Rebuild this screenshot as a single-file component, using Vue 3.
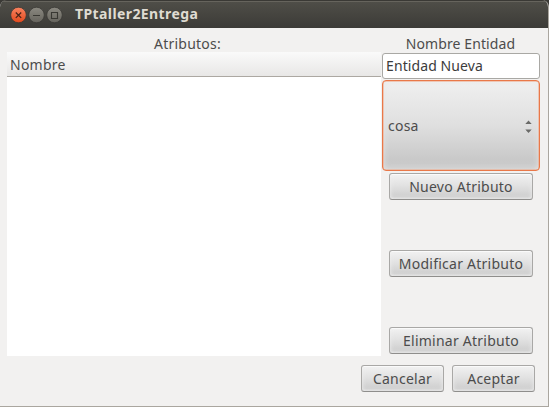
<script setup>
import { ref } from 'vue'

const name = ref('Entidad Nueva')
const actions = [
  { label: 'Nuevo Atributo', cls: 'nuevo' },
  { label: 'Modificar Atributo', cls: 'modificar' },
  { label: 'Eliminar Atributo', cls: 'eliminar' },
]
</script>

<template>
  <div class="window">
    <header class="titlebar">
      <svg class="controls" width="54" height="18" viewBox="0 0 54 18">
        <defs>
          <linearGradient id="close" x1="0" y1="0" x2="0" y2="1">
            <stop offset="0" stop-color="#f88360" />
            <stop offset="1" stop-color="#e2481c" />
          </linearGradient>
          <linearGradient id="grey" x1="0" y1="0" x2="0" y2="1">
            <stop offset="0" stop-color="#8b8981" />
            <stop offset="1" stop-color="#65635c" />
          </linearGradient>
        </defs>
        <g stroke="#3a3935" stroke-width="0.8">
          <circle cx="8.5" cy="9" r="7.8" fill="url(#close)" />
          <circle cx="26.5" cy="9" r="7.8" fill="url(#grey)" />
          <circle cx="44.5" cy="9" r="7.8" fill="url(#grey)" />
        </g>
        <path d="M5.8 6.5l5.4 5.4M11.2 6.5l-5.4 5.4" stroke="#4b2418" stroke-width="1.3" fill="none" />
        <path d="M23 9.5h7M41.5 6.5h6v6h-6z" stroke="#393833" stroke-width="1.1" fill="none" />
      </svg>
      <span class="title">TPtaller2Entrega</span>
    </header>
    <main class="content">
      <section class="left">
        <div class="label attrs"><span>Atributos:</span></div>
        <div class="table">
          <div class="thead"><span>Nombre</span></div>
        </div>
      </section>
      <section class="right">
        <div class="label ent"><span>Nombre Entidad</span></div>
        <div class="entry"><span>{{ name }}</span></div>
        <div class="combo">
          <span>cosa</span>
          <svg width="7" height="14" viewBox="0 0 7 14">
            <path d="M0.3 5L3.5 1.6l3.2 3.4zM0.3 10.6L3.5 14l3.2-3.4z" fill="#6a6a68" />
          </svg>
        </div>
        <div class="actions">
          <button v-for="a in actions" :key="a.cls" :class="['btn', a.cls]"><span>{{ a.label }}</span></button>
        </div>
      </section>
    </main>
    <footer class="footer">
      <button class="btn cancelar"><span>Cancelar</span></button>
      <button class="btn aceptar"><span>Aceptar</span></button>
    </footer>
  </div>
</template>

<style>
body { margin: 0; background: #3b3a36; overflow: hidden; }
</style>

<style scoped>
.window {
  box-sizing: border-box;
  width: 549px;
  height: 407px;
  background: #f2f1f0;
  border-right: 1px solid #aaa69f;
  border-bottom: 1px solid #aaa69f;
  border-radius: 7px 7px 0 0;
  overflow: hidden;
  font-family: "Noto Sans", "Open Sans", sans-serif;
  font-size: 14px;
  letter-spacing: 0.24px;
  color: #4c4c4c;
  white-space: nowrap;
  display: flex;
  flex-direction: column;
}
.titlebar {
  box-sizing: border-box;
  height: 28px;
  margin-right: -1px;
  flex: none;
  display: flex;
  align-items: center;
  padding: 0 0 0 10px;
  background: linear-gradient(#504f49, #3c3b37);
  box-shadow: inset 0 1px #3a3935, inset 0 2px #66645d;
}
.controls { position: relative; top: 1px; }
.title {
  margin-left: 11px;
  font-weight: 700;
  font-size: 14px;
  letter-spacing: 0.4px;
  line-height: 20px;
  color: #dfdbd2;
}
.content { display: flex; height: 328px; padding: 0 7px; flex: none; }
.left { width: 374px; display: flex; flex-direction: column; }
.right { width: 160px; display: flex; flex-direction: column; }
.label {
  height: 24px;
  box-sizing: border-box;
  padding-top: 6px;
  line-height: 20px;
  display: flex;
  justify-content: center;
}
.attrs { padding-right: 13px; }
.ent { padding-right: 1px; letter-spacing: 0.1px; }
.table { flex: 1; background: #fff; }
.thead {
  box-sizing: border-box;
  height: 25px;
  padding: 3px 0 0 3px;
  line-height: 20px;
  background: linear-gradient(#fafafa, #e8e7e6);
  border-bottom: 1px solid #aca8a2;
}
.entry {
  box-sizing: border-box;
  height: 26px;
  margin: 1px 0 0 1px;
  width: 158px;
  padding: 2px 3px;
  line-height: 20px;
  letter-spacing: 0.1px;
  background: #fff;
  border: 1px solid #a9a8a4;
  border-radius: 3px;
  color: #3c3c3c;
}
.combo {
  box-sizing: border-box;
  width: 158px;
  height: 91px;
  margin: 1px 0 0 1px;
  padding: 0 7px 0 5px;
  display: flex;
  align-items: center;
  justify-content: space-between;
  background: linear-gradient(#f0f0f0, #dfdfdf 50%, #c9c9c9 88%, #cccccc);
  border: 1px solid #e97849;
  border-radius: 4px;
  box-shadow: inset 0 0 0 0.5px #f1a17e, inset 0 0 6px #e9e9e9;
}
.actions {
  display: flex;
  flex-direction: column;
  justify-content: space-between;
  height: 181px;
  margin: 2px 8px 0;
}
.btn {
  box-sizing: border-box;
  height: 27px;
  padding: 0;
  margin: 0;
  font: inherit;
  letter-spacing: inherit;
  line-height: 20px;
  color: #4c4c4c;
  display: flex;
  align-items: center;
  justify-content: center;
  background: linear-gradient(#f2f2f2, #e2e2e2 45%, #cfcfcf 90%, #dadada);
  border: 1px solid #a9a8a6;
  border-bottom-color: #8f8e8c;
  border-radius: 3px;
  box-shadow: inset 0 1px #fafafa, inset 0 0 4px #f0f0f0;
}
.footer {
  display: flex;
  justify-content: flex-end;
  gap: 8px;
  padding: 9px 13px 0 0;
}
.footer .btn { width: 83px; }
</style>
